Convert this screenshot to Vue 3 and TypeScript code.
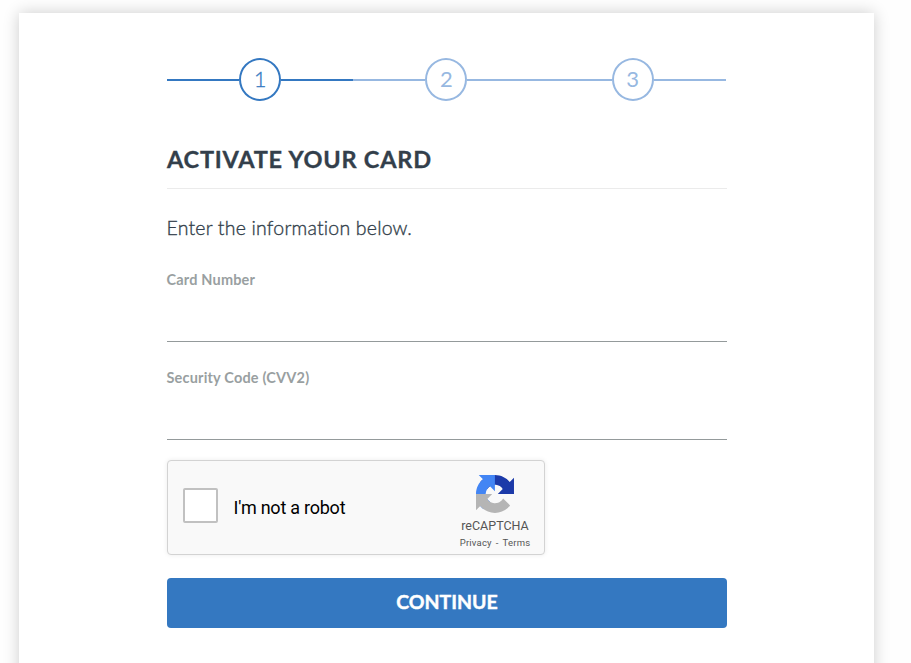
<script setup lang="ts">
import { ref } from 'vue'

interface Field {
  id: string
  label: string
}

const steps: number[] = [1, 2, 3]
const current = ref<number>(1)
const values = ref<Record<string, string>>({ card: '', cvv: '' })
const fields: Field[] = [
  { id: 'card', label: 'Card Number' },
  { id: 'cvv', label: 'Security Code (CVV2)' },
]
</script>

<template>
  <div class="page">
    <main class="card">
      <ol class="steps">
        <li v-for="n in steps" :key="n" class="step" :class="{ active: n === current }">
          <span class="line"></span>
          <span class="circle">{{ n }}</span>
          <span class="line"></span>
        </li>
      </ol>

      <h1 class="title">ACTIVATE YOUR CARD</h1>
      <p class="intro">Enter the information below.</p>

      <div v-for="f in fields" :key="f.id" class="field">
        <label :for="f.id">{{ f.label }}</label>
        <input :id="f.id" v-model="values[f.id]" type="text" autocomplete="off" />
      </div>

      <div class="captcha">
        <span class="checkbox" role="checkbox" aria-checked="false"></span>
        <span class="prompt">I'm not a robot</span>
        <div class="brand">
          <svg class="logo" viewBox="0 0 64 64" aria-hidden="true">
            <path fill="#1c3aa9" d="M64 31.955l-.033-1.37V4.687l-7.16 7.16C50.948 4.674 42.033.093 32.05.093c-10.4 0-19.622 4.96-25.458 12.64l11.736 11.86a15.55 15.55 0 0 1 4.754-5.334c2.05-1.6 4.952-2.906 8.968-2.906.485 0 .86.057 1.135.163 4.976.393 9.288 3.14 11.828 7.124l-8.307 8.307L64 31.953" />
            <path fill="#4285f4" d="M31.862.094l-1.37.033H4.594l7.16 7.16C4.58 13.147 0 22.06 0 32.046c0 10.4 4.96 19.622 12.64 25.458L24.5 45.768a15.55 15.55 0 0 1-5.334-4.754c-1.6-2.05-2.906-4.952-2.906-8.968 0-.485.057-.86.163-1.135.393-4.976 3.14-9.288 7.124-11.828l8.307 8.307L31.86.095" />
            <path fill="#b5b5b5" d="M.001 32.045l.033 1.37v25.898l7.16-7.16c5.86 7.173 14.774 11.754 24.76 11.754 10.4 0 19.622-4.96 25.458-12.64l-11.736-11.86a15.55 15.55 0 0 1-4.754 5.334c-2.05 1.6-4.952 2.906-8.968 2.906-.485 0-.86-.057-1.135-.163-4.976-.393-9.288-3.14-11.828-7.124l8.307-8.307c-10.522.04-22.4.066-27.295-.005" />
          </svg>
          <span class="brand-name">reCAPTCHA</span>
          <span class="links"><span>Privacy</span><span class="dash">-</span><span>Terms</span></span>
        </div>
      </div>

      <button type="button" class="continue">CONTINUE</button>
    </main>
  </div>
</template>

<style>
body {
  background: #fefefe;
}
</style>

<style scoped>
.page {
  box-sizing: border-box;
  height: 663px;
  padding: 13px 37px 0 19px;
  overflow: hidden;
  font-family: Lato, "Open Sans", sans-serif;
  color: #333f4b;
}

.card {
  box-sizing: border-box;
  height: 700px;
  padding: 45px 147px 0 148px;
  background: #fff;
  box-shadow: 0 0 15px rgba(0, 0, 0, 0.2);
}

.steps {
  display: flex;
  height: 43px;
  margin: 0;
  padding: 0 1.4px 0 0;
  list-style: none;
}

.step {
  display: flex;
  flex: 1;
  align-items: center;
  color: #97b8e1;
}

.step.active {
  color: #3478c1;
}

.line {
  flex: 1;
  height: 2px;
  background: currentColor;
}

.circle {
  box-sizing: border-box;
  width: 42px;
  height: 43px;
  border: 2px solid currentColor;
  border-radius: 50%;
  font-size: 22px;
  line-height: 38px;
  text-align: center;
}

.step.active .circle {
  font-weight: 300;
  -webkit-text-stroke: 0.3px currentColor;
}

.title {
  height: 57px;
  box-sizing: border-box;
  margin: 31px 0 0;
  padding-top: 11px;
  border-bottom: 1px solid #ebebeb;
  font-size: 23.5px;
  font-weight: 700;
  line-height: 32px;
  letter-spacing: 0.78px;
  white-space: nowrap;
  -webkit-text-stroke: 0.35px currentColor;
}

.intro {
  margin: 26px 0 0;
  font-size: 19.5px;
  font-weight: 300;
  line-height: 26px;
  letter-spacing: 0.2px;
  text-indent: -0.5px;
  white-space: nowrap;
  -webkit-text-stroke: 0.35px currentColor;
}

.field {
  display: flex;
  flex-direction: column;
  height: 98px;
}

.intro + .field {
  margin-top: 3px;
}

label {
  padding: 26px 0 1px;
  color: #999fa1;
  font-size: 14.5px;
  font-weight: 700;
  line-height: 20px;
  letter-spacing: 0.18px;
  text-indent: -0.5px;
}

input {
  box-sizing: border-box;
  width: 100%;
  height: 51px;
  margin: 0;
  padding: 0;
  border: 0;
  border-bottom: 1px solid #949a9b;
  outline: none;
  background: transparent;
  font: inherit;
}

.captcha {
  display: flex;
  box-sizing: border-box;
  align-items: center;
  width: 378px;
  height: 95px;
  margin-top: 20px;
  padding-left: 15px;
  border: 1px solid #d3d3d3;
  border-radius: 4px;
  background: #f9f9f9;
  box-shadow: 0 0 5px rgba(0, 0, 0, 0.08);
  font-family: Roboto, sans-serif;
}

.checkbox {
  box-sizing: border-box;
  width: 35px;
  height: 35px;
  margin-top: -4px;
  border: 2px solid #c1c1c1;
  border-radius: 2px;
  background: #fff;
}

.prompt {
  margin-left: 15.5px;
  color: #000;
  font-size: 18px;
  line-height: 22px;
  letter-spacing: -0.24px;
}

.brand {
  display: flex;
  flex-direction: column;
  align-items: center;
  width: 98px;
  height: 93px;
  margin-left: auto;
  color: #555;
}

.logo {
  width: 38px;
  height: 38px;
  margin-top: 14px;
}

.brand-name {
  margin-top: 4px;
  font-size: 12.5px;
  line-height: 17px;
}

.links {
  display: flex;
  gap: 4px;
  margin-top: 1px;
  font-size: 9.5px;
  line-height: 15px;
  letter-spacing: 0.2px;
}

.continue {
  display: block;
  width: 100%;
  height: 50px;
  margin: 23px 0 0;
  padding: 0 0 2px;
  border: 0;
  border-radius: 4px;
  background: #3478c1;
  color: #fff;
  font: 700 19.5px/48px Lato, sans-serif;
  -webkit-text-stroke: 0.4px currentColor;
}
</style>
